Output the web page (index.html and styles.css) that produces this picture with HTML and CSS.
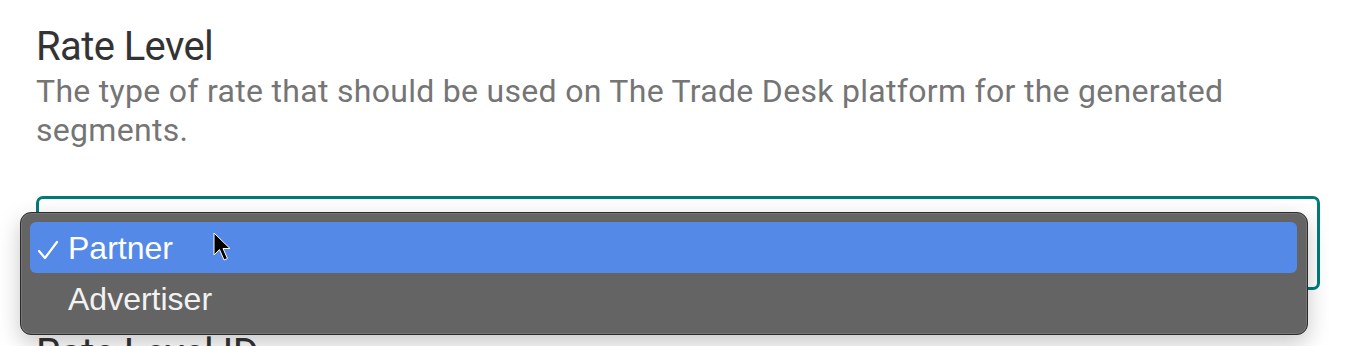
FILE: index.html
```html
<!DOCTYPE html>
<html lang="en">
<head>
    <meta charset="UTF-8">
    <title>Rate Level</title>
    <link rel="stylesheet" href="styles.css">
</head>
<body>
    <div class="settings">
        <section class="field">
            <h2 class="field-title">Rate Level</h2>
            <p class="field-desc">The type of rate that should be used on The Trade Desk platform for the generated segments.</p>

            <div class="select-wrap">
                <div class="select-box"></div>

                <!-- native popup menu (open state) -->
                <ul class="select-menu">
                    <li class="option selected">
                        <svg class="check" viewBox="0 0 22 20" width="22" height="20">
                            <path d="M2 11 L8 18 L20 2" fill="none" stroke="#fff" stroke-width="2.2" stroke-linecap="round" stroke-linejoin="round"/>
                        </svg>
                        <span>Partner</span>
                    </li>
                    <li class="option">
                        <span>Advertiser</span>
                    </li>
                </ul>

                <svg class="cursor" viewBox="0 0 20 31" width="20" height="31">
                    <path d="M1 1 L1 23 L6.5 17.5 L11 28 L14.5 26.5 L10 16.5 L17 16.5 Z" fill="#000" stroke="#fff" stroke-width="1" stroke-linejoin="round"/>
                </svg>
            </div>
        </section>

        <section class="field">
            <h2 class="field-title">Rate Level ID</h2>
        </section>
    </div>
</body>
</html>
```

FILE: styles.css
```css
/* Page */
html, body {
    margin: 0;
    padding: 0;
    background-color: #fff;
    font-family: 'Roboto', sans-serif;
    color: #333;
}

.settings {
    padding: 23px 36px 0 36px;
    width: 1284px;
}

/* Field block */
.field-title {
    margin: 0;
    font-size: 40px;
    font-weight: 400;
    line-height: 48px;
    letter-spacing: -0.6px;
    color: #333;
}

.field-desc {
    margin: 1px 0 0 0;
    font-size: 32px;
    line-height: 39px;
    letter-spacing: 0.3px;
    color: #757575;
}

.select-wrap {
    position: relative;
    margin: 46px 0 40px 0;
}

.select-box {
    height: 88px;
    border: 3px solid #007b77;
    border-radius: 7px;
    background-color: #fff;
}

/* Open dropdown menu */
.select-menu {
    position: absolute;
    top: 16px;
    left: -16px;
    width: 1267px;
    margin: 0;
    padding: 9px 10px 10px 9px;
    list-style: none;
    background-color: #636463;
    border: 1px solid #2b2b2b;
    border-radius: 11px;
    box-shadow: inset 0 0 0 1px rgba(255, 255, 255, 0.12), 0 8px 22px rgba(0, 0, 0, 0.22);
    font-family: 'Liberation Sans', Arial, sans-serif;
    font-size: 32px;
    color: #f2f2f2;
}

.option {
    display: flex;
    align-items: center;
    height: 51px;
    padding-left: 38px;
    border-radius: 6px;
    position: relative;
}

.option span {
    position: relative;
    top: 1px;
}

.option.selected {
    background-color: #5489e8;
    color: #fff;
}

.option .check {
    position: absolute;
    left: 7px;
    top: 18px;
}

.cursor {
    position: absolute;
    top: 36px;
    left: 177px;
}
```
